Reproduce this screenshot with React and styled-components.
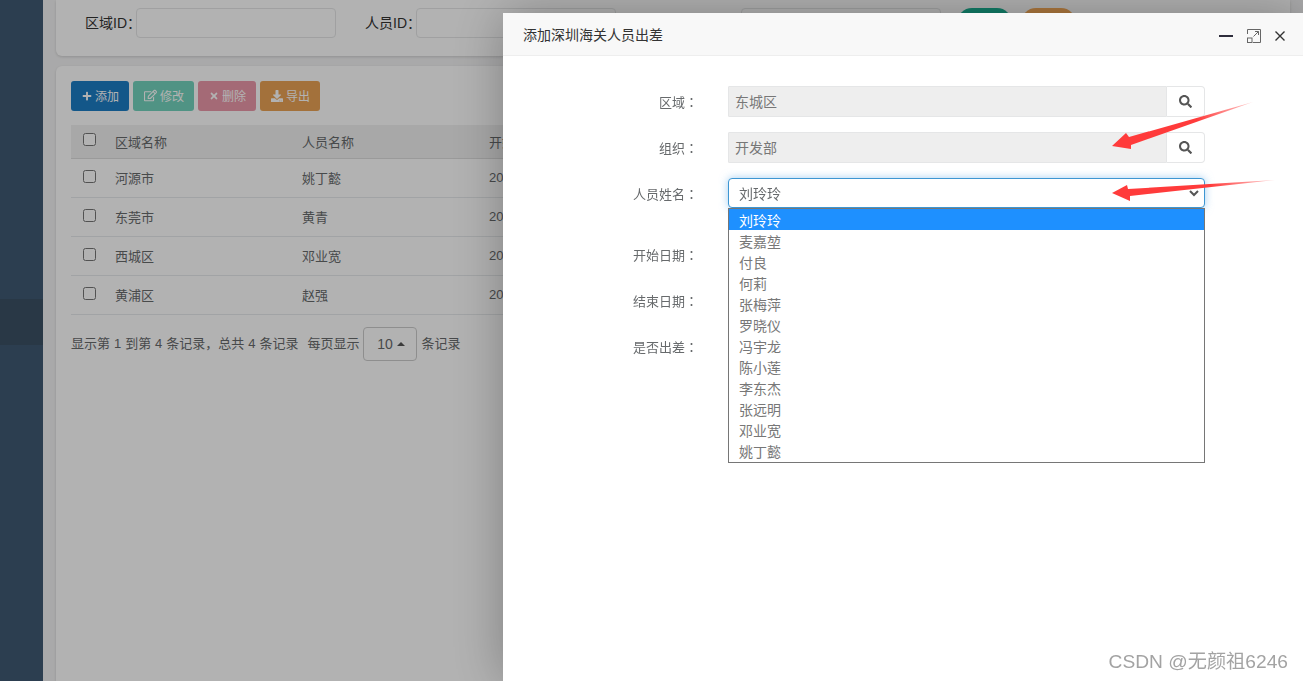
import styled, { createGlobalStyle } from "styled-components";
import { FaPlus, FaRegEdit, FaTimes, FaDownload, FaSearch } from "react-icons/fa";

const rows = [
  { area: "河源市", name: "姚丁懿", date: "2021-06-01" },
  { area: "东莞市", name: "黄青", date: "2021-06-02" },
  { area: "西城区", name: "邓业宽", date: "2021-06-03" },
  { area: "黄浦区", name: "赵强", date: "2021-06-04" },
];

const people = ["刘玲玲", "麦嘉堃", "付良", "何莉", "张梅萍", "罗晓仪", "冯宇龙", "陈小莲", "李东杰", "张远明", "邓业宽", "姚丁懿"];

function App() {
  return (
    <>
      <GlobalStyle />
      <Page>
        <Sidebar>
          <NavItem />
        </Sidebar>
        <Main>
          <FilterPanel>
            <FilterLabel $width={51}>区域ID：</FilterLabel>
            <FilterInput />
            <FilterGap />
            <FilterLabel $width={51}>人员ID：</FilterLabel>
            <FilterInput />
            <FilterGap />
            <FilterLabel $width={96}>出差日期：</FilterLabel>
            <FilterInput />
            <PillButton $color="#1ab394" $gap={16}>搜索</PillButton>
            <PillButton $color="#f8ac59" $gap={9}>重置</PillButton>
          </FilterPanel>
          <TablePanel>
            <Toolbar>
              <ToolButton $color="#1c7dc5"><FaPlus size={10} />添加</ToolButton>
              <ToolButton $color="#73d3bd"><FaRegEdit size={13} />修改</ToolButton>
              <ToolButton $color="#eb98a9"><FaTimes size={10} />删除</ToolButton>
              <ToolButton $color="#eaa355"><FaDownload size={12} />导出</ToolButton>
            </Toolbar>
            <DataTable>
              <thead>
                <tr>
                  <HeadCell $width={32}><Check type="checkbox" /></HeadCell>
                  <HeadCell $width={187}>区域名称</HeadCell>
                  <HeadCell $width={187}>人员名称</HeadCell>
                  <HeadCell>开始日期</HeadCell>
                </tr>
              </thead>
              <tbody>
                {rows.map((row) => (
                  <tr key={row.area}>
                    <BodyCell><Check type="checkbox" /></BodyCell>
                    <BodyCell>{row.area}</BodyCell>
                    <BodyCell>{row.name}</BodyCell>
                    <BodyCell>{row.date}</BodyCell>
                  </tr>
                ))}
              </tbody>
            </DataTable>
            <Pager>
              <PagerText>显示第 1 到第 4 条记录，总共 4 条记录</PagerText>
              <PagerSize>
                <PagerText>每页显示</PagerText>
                <SizeButton>10<Caret /></SizeButton>
                <PagerText>条记录</PagerText>
              </PagerSize>
            </Pager>
          </TablePanel>
        </Main>
      </Page>

      <Shade />

      <Modal>
        <ModalHeader>
          <ModalTitle>添加深圳海关人员出差</ModalTitle>
          <ModalTools>
            <MinLine />
            <svg width="14" height="14" viewBox="0 0 14 14" fill="none" stroke="#666" strokeWidth="1">
              <path d="M0.5 5V0.5H13.5V13.5H6" />
              <rect x="0.5" y="9" width="4.5" height="4.5" />
              <path d="M6.5 7.5L11.5 2.5M8 2.5H11.5V6" />
            </svg>
            <svg width="10" height="10" viewBox="0 0 10 10" fill="none" stroke="#333" strokeWidth="1.4">
              <path d="M0.5 0.5L9.5 9.5M9.5 0.5L0.5 9.5" />
            </svg>
          </ModalTools>
        </ModalHeader>
        <ModalBody>
          <FormRow>
            <FormLabel>区域<Colon>：</Colon></FormLabel>
            <Field>
              <ReadonlyValue>东城区</ReadonlyValue>
              <SearchAddon><FaSearch size={13} /></SearchAddon>
            </Field>
          </FormRow>
          <FormRow>
            <FormLabel>组织<Colon>：</Colon></FormLabel>
            <Field>
              <ReadonlyValue>开发部</ReadonlyValue>
              <SearchAddon><FaSearch size={13} /></SearchAddon>
            </Field>
          </FormRow>
          <FormRow $extra={15}>
            <FormLabel>人员姓名<Colon>：</Colon></FormLabel>
            <Field>
              <SelectBox>
                刘玲玲
                <svg width="10" height="7" viewBox="0 0 10 7" fill="none" stroke="#555" strokeWidth="2">
                  <path d="M1 1L5 5L9 1" />
                </svg>
              </SelectBox>
              <OptionList>
                {people.map((person, i) => (
                  <Option key={person} $active={i === 0}>{person}</Option>
                ))}
              </OptionList>
            </Field>
          </FormRow>
          <FormRow>
            <FormLabel>开始日期<Colon>：</Colon></FormLabel>
            <Field><PlainInput /></Field>
          </FormRow>
          <FormRow>
            <FormLabel>结束日期<Colon>：</Colon></FormLabel>
            <Field><PlainInput /></Field>
          </FormRow>
          <FormRow>
            <FormLabel>是否出差<Colon>：</Colon></FormLabel>
            <Field><PlainInput /></Field>
          </FormRow>
        </ModalBody>
      </Modal>

      <ArrowLayer viewBox="0 0 1303 681">
        <defs>
          <linearGradient id="fade1" x1="1113" y1="146" x2="1253" y2="102" gradientUnits="userSpaceOnUse">
            <stop offset="0.6" stopColor="#ff3b3b" />
            <stop offset="1" stopColor="#ff3b3b" stopOpacity="0.25" />
          </linearGradient>
          <linearGradient id="fade2" x1="1112" y1="193" x2="1275" y2="180" gradientUnits="userSpaceOnUse">
            <stop offset="0.6" stopColor="#ff3b3b" />
            <stop offset="1" stopColor="#ff3b3b" stopOpacity="0.25" />
          </linearGradient>
        </defs>
        <polygon fill="url(#fade1)" points="1112,146 1126,133 1129,137 1253,102 1131,145 1131,149" />
        <polygon fill="url(#fade2)" points="1112,193 1127,185 1128,189 1275,180 1130,196 1130,201" />
      </ArrowLayer>

      <Watermark>CSDN @无颜祖6246</Watermark>
    </>
  );
}

const GlobalStyle = createGlobalStyle`
  html, body {
    margin: 0;
    height: 100%;
    overflow: hidden;
    background: #f3f3f4;
    font-family: "Liberation Sans", "Noto Sans CJK SC", sans-serif;
    font-size: 13px;
    color: #676a6c;
  }
  * { box-sizing: border-box; }
`;

const Page = styled.div`
  display: flex;
  height: 681px;
  overflow: hidden;
`;

const Sidebar = styled.aside`
  position: relative;
  z-index: 5;
  width: 43px;
  flex-shrink: 0;
  padding-top: 299px;
  background: #2c3e50;
`;

const NavItem = styled.div`
  height: 46px;
  background: #293846;
`;

const Main = styled.main`
  flex: 1;
  min-width: 0;
  display: flex;
  flex-direction: column;
  gap: 10px;
  padding: 0 13px;
`;

const FilterPanel = styled.section`
  display: flex;
  align-items: flex-start;
  height: 56px;
  padding: 8px 0 0 29px;
  background: #fff;
  border-radius: 0 0 6px 6px;
  box-shadow: 0 1px 3px rgba(0, 0, 0, 0.15);
`;

const FilterLabel = styled.label`
  width: ${(p) => p.$width}px;
  line-height: 30px;
  font-size: 14px;
  color: #333;
  white-space: nowrap;
`;

const FilterInput = styled.div`
  width: 200px;
  height: 30px;
  background: #fff;
  border: 1px solid #e5e6e7;
  border-radius: 4px;
`;

const FilterGap = styled.div`
  width: 29px;
`;

const PillButton = styled.button`
  width: 55px;
  height: 30px;
  margin-left: ${(p) => p.$gap}px;
  border: 0;
  border-radius: 15px;
  background: ${(p) => p.$color};
  color: #fff;
`;

const TablePanel = styled.section`
  flex: 1;
  padding: 15px;
  background: #fff;
  border-radius: 6px 6px 0 0;
  box-shadow: 0 1px 3px rgba(0, 0, 0, 0.15);
`;

const Toolbar = styled.div`
  display: flex;
  gap: 4px;
  margin-bottom: 14px;
`;

const ToolButton = styled.button`
  display: flex;
  align-items: center;
  gap: 3px;
  height: 30px;
  padding: 0 10px 1px 11px;
  border: 0;
  border-radius: 3px;
  background: ${(p) => p.$color};
  color: #fff;
  font-family: inherit;
  font-size: 12px;
`;

const DataTable = styled.table`
  width: 100%;
  table-layout: fixed;
  border-collapse: collapse;
`;

const HeadCell = styled.th`
  width: ${(p) => (p.$width ? `${p.$width}px` : "auto")};
  height: 33px;
  padding: 0 12px;
  background: #f1f1f1;
  border-bottom: 1px solid #ddd;
  font-weight: 400;
  text-align: left;
`;

const BodyCell = styled.td`
  height: 39px;
  padding: 0 12px;
  border-bottom: 1px solid #e7eaec;
`;

const Check = styled.input`
  display: block;
  width: 13px;
  height: 13px;
  margin: -3px 0 0;
`;

const Pager = styled.div`
  display: flex;
  align-items: center;
  gap: 9px;
  margin-top: 12px;
`;

const PagerText = styled.span`
  padding-bottom: 3px;
  word-spacing: 0.35px;
`;

const PagerSize = styled.div`
  display: flex;
  align-items: center;
  gap: 4px;
`;

const SizeButton = styled.div`
  display: flex;
  align-items: center;
  justify-content: center;
  gap: 4px;
  width: 54px;
  height: 34px;
  padding-left: 1px;
  border: 1px solid #ccc;
  border-radius: 4px;
  background: #fff;
  font-size: 14px;
`;

const Caret = styled.span`
  width: 0;
  height: 0;
  border-left: 4px solid transparent;
  border-right: 4px solid transparent;
  border-bottom: 4px solid #555;
`;

const Shade = styled.div`
  position: fixed;
  inset: 0;
  z-index: 3;
  background: rgba(0, 0, 0, 0.3);
`;

const Modal = styled.div`
  position: fixed;
  top: 13px;
  left: 503px;
  z-index: 10;
  width: 800px;
  height: 668px;
  background: #fff;
  box-shadow: 1px 1px 50px rgba(0, 0, 0, 0.3);
`;

const ModalHeader = styled.header`
  display: flex;
  align-items: center;
  justify-content: space-between;
  height: 43px;
  padding: 0 18px 0 20px;
  background: #f8f8f8;
  border-bottom: 1px solid #eee;
`;

const ModalTitle = styled.h3`
  margin: 0 0 1px;
  font-size: 14px;
  font-weight: 400;
  color: #333;
`;

const ModalTools = styled.div`
  display: flex;
  align-items: center;
  gap: 14px;
  margin-top: 3px;
`;

const MinLine = styled.span`
  width: 14px;
  height: 2px;
  background: #2e2d3c;
`;

const ModalBody = styled.div`
  padding-top: 30px;
`;

const FormRow = styled.div`
  display: flex;
  align-items: flex-start;
  gap: 30px;
  height: 31px;
  margin-bottom: ${(p) => 15 + (p.$extra || 0)}px;
`;

const FormLabel = styled.label`
  width: 195px;
  line-height: 31px;
  text-align: right;
  white-space: nowrap;
`;

const Colon = styled.span`
  font-family: "Noto Sans CJK TC", sans-serif;
`;

const Field = styled.div`
  position: relative;
  display: flex;
  width: 477px;
`;

const ReadonlyValue = styled.div`
  flex: 1;
  height: 31px;
  padding-left: 6px;
  background: #eee;
  border: 1px solid #e5e6e7;
  border-radius: 1px 0 0 1px;
  font-size: 14px;
  line-height: 31px;
  color: #777;
`;

const SearchAddon = styled.div`
  display: flex;
  align-items: center;
  justify-content: center;
  width: 38px;
  height: 31px;
  background: #fff;
  border: 1px solid #e5e6e7;
  border-left: 0;
  border-radius: 0 4px 4px 0;
  color: #555;
`;

const SelectBox = styled.div`
  display: flex;
  align-items: center;
  justify-content: space-between;
  width: 100%;
  height: 30px;
  padding: 0 5px 0 10px;
  background: #fff;
  border: 1px solid #3d96d2;
  border-radius: 4px;
  box-shadow: 0 0 8px rgba(102, 175, 233, 0.6);
  font-size: 14px;
  color: #676a6c;
`;

const OptionList = styled.div`
  position: absolute;
  top: 30px;
  left: 0;
  z-index: 2;
  width: 100%;
  padding-bottom: 1px;
  background: #fff;
  border: 1px solid #767676;
`;

const Option = styled.div`
  height: 21px;
  padding-left: 10px;
  font-size: 14px;
  line-height: 24px;
  background: ${(p) => (p.$active ? "#1e90ff" : "#fff")};
  color: ${(p) => (p.$active ? "#fff" : "#777")};
`;

const PlainInput = styled.div`
  width: 100%;
  height: 31px;
  border: 1px solid #e5e6e7;
  border-radius: 4px;
`;

const ArrowLayer = styled.svg`
  position: fixed;
  inset: 0;
  z-index: 20;
  width: 1303px;
  height: 681px;
  pointer-events: none;
`;

const Watermark = styled.div`
  position: fixed;
  right: 15px;
  bottom: 7px;
  z-index: 20;
  font-size: 19.2px;
  color: #a3a3a3;
`;

export default App;
